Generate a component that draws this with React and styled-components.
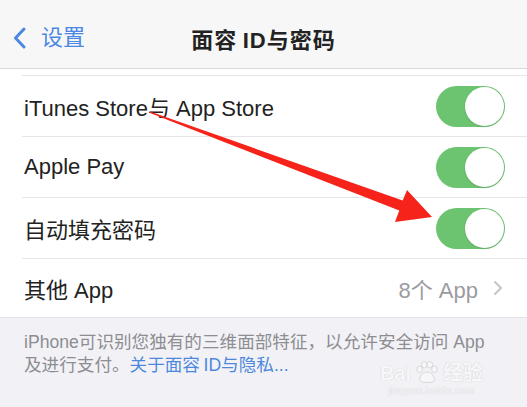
import React from 'react';
import styled, { createGlobalStyle } from 'styled-components';

const Global = createGlobalStyle`
  html, body {
    margin: 0;
    padding: 0;
    background: #ffffff;
  }
  body {
    font-family: "Liberation Sans", "Noto Sans CJK SC", sans-serif;
    -webkit-font-smoothing: antialiased;
  }
`;

const Page = styled.div`
  position: relative;
  width: 527px;
  height: 407px;
  overflow: hidden;
  display: flex;
  flex-direction: column;
  background: #fff;
`;

const NavBar = styled.div`
  position: relative;
  height: 69px;
  flex: none;
  display: flex;
  align-items: center;
  background: #f7f7f7;
  border-bottom: 1px solid #d8d8da;
  padding-top: 8px;
  box-sizing: border-box;
`;

const Back = styled.div`
  display: flex;
  align-items: center;
  gap: 15px;
  padding-left: 13px;
  color: #4c88e3;
  font-size: 22px;
  line-height: 1;
  svg {
    display: block;
  }
`;

const Title = styled.div`
  position: absolute;
  left: 0;
  right: 0;
  top: 8px;
  bottom: 0;
  display: flex;
  align-items: center;
  justify-content: center;
  font-size: 22px;
  font-weight: 600;
  letter-spacing: 1px;
  color: #222;
  pointer-events: none;
`;

const Peek = styled.div`
  height: 6px;
  flex: none;
  margin-left: 22px;
  border-bottom: 1px solid #e6e6e8;
`;

const List = styled.div`
  flex: none;
  border-bottom: 1px solid #e3e3e6;
`;

const Row = styled.div`
  height: ${(p) => (p.$last ? 58 : 60)}px;
  padding-right: 22px;
  display: flex;
  align-items: center;
  justify-content: space-between;
  border-bottom: ${(p) => (p.$last ? 'none' : '1px solid #e6e6e8')};
  margin-left: ${(p) => (p.$last ? 24 : 22)}px;
  padding-left: ${(p) => (p.$last ? 0 : 2)}px;
`;

const Label = styled.span`
  font-size: 22px;
  color: #222;
  white-space: nowrap;
`;

const Toggle = styled.div`
  position: relative;
  width: 69px;
  height: 41px;
  border-radius: 21px;
  background: #6cc471;
  flex: none;
  &::after {
    content: '';
    position: absolute;
    right: 1px;
    top: 1px;
    width: 39px;
    height: 39px;
    border-radius: 50%;
    background: #fff;
    box-shadow: 0 1px 2px rgba(0, 0, 0, 0.12);
  }
`;

const Detail = styled.div`
  display: flex;
  align-items: center;
  gap: 15px;
  padding-right: 2px;
  font-size: 22px;
  color: #9b9b9f;
  svg {
    display: block;
  }
`;

const Footer = styled.div`
  position: relative;
  flex: 1;
  background: #f2f2f6;
  padding: 13px 24px 0 24px;
  font-size: 17.6px;
  line-height: 23px;
  color: #8d8d92;
`;

const Link = styled.span`
  color: #4e88dc;
`;

const Watermark = styled.div`
  position: absolute;
  right: 44px;
  bottom: 10px;
  display: flex;
  flex-direction: column;
  align-items: center;
  color: #f7f7f9;
  text-shadow: 0 0 1px #d4d4d8, 0 0 1px #d4d4d8;
  pointer-events: none;
`;

const Brand = styled.div`
  display: flex;
  align-items: center;
  font-size: 20px;
  font-weight: 700;
  line-height: 22px;
  gap: 2px;
`;

const Site = styled.div`
  font-size: 10px;
  line-height: 12px;
  letter-spacing: 0.3px;
`;

const ArrowLayer = styled.svg`
  position: absolute;
  left: 0;
  top: 0;
  pointer-events: none;
`;

function Chevron() {
  return (
    <svg width="13" height="22" viewBox="0 0 13 22">
      <path d="M11 2 L2.5 11 L11 20" fill="none" stroke="#4c88e3" strokeWidth="3" strokeLinecap="round" strokeLinejoin="round" />
    </svg>
  );
}

function Disclosure() {
  return (
    <svg width="10" height="16" viewBox="0 0 10 16">
      <path d="M2 2 L8 8 L2 14" fill="none" stroke="#c5c5ca" strokeWidth="2" strokeLinecap="round" strokeLinejoin="round" />
    </svg>
  );
}

function Paw() {
  return (
    <svg width="28" height="24" viewBox="0 0 30 26">
      <g fill="#f7f7f9" stroke="#d4d4d8" strokeWidth="1">
        <ellipse cx="7" cy="9" rx="3" ry="3.5" />
        <ellipse cx="12" cy="4" rx="3" ry="3.5" />
        <ellipse cx="18" cy="4" rx="3" ry="3.5" />
        <ellipse cx="23" cy="9" rx="3" ry="3.5" />
        <path d="M7 21 C7 14 12 12 15 12 C18 12 23 14 23 21 C23 24 7 24 7 21 Z" />
      </g>
    </svg>
  );
}

const toggles = ['iTunes Store与 App Store', 'Apple Pay', '自动填充密码'];

export default function App() {
  return (
    <>
      <Global />
      <Page>
        <NavBar>
          <Back>
            <Chevron />
            <span>设置</span>
          </Back>
          <Title>面容{'\u2009'}ID与密码</Title>
        </NavBar>
        <Peek />
        <List>
          {toggles.map((t) => (
            <Row key={t}>
              <Label>{t}</Label>
              <Toggle />
            </Row>
          ))}
          <Row $last>
            <Label>其他 App</Label>
            <Detail>
              <span>8个 App</span>
              <Disclosure />
            </Detail>
          </Row>
        </List>
        <Footer>
          iPhone可识别您独有的三维面部特征，以允许安全访问 App
          <br />
          及进行支付。<Link>关于面容{'\u2009'}ID与隐私...</Link>
          <Watermark>
            <Brand>
              <span>Bai</span>
              <Paw />
              <span>经验</span>
            </Brand>
            <Site>jingyan.baidu.com</Site>
          </Watermark>
        </Footer>
        <ArrowLayer width="527" height="407" viewBox="0 0 527 407">
          <polygon
            points="150,111.5 402.7,200.5 407,190 432,217 395,222 399.3,210.5 150,113"
            fill="#f6231a"
          />
        </ArrowLayer>
      </Page>
    </>
  );
}
